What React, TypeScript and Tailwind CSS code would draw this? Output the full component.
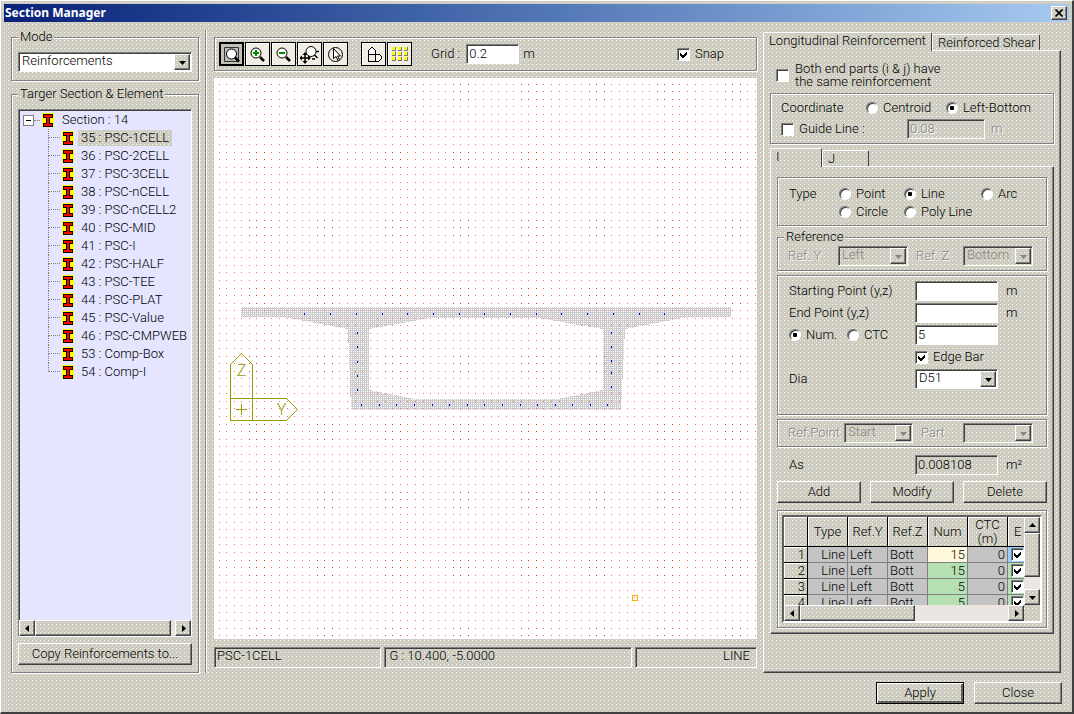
import React from 'react'
import clsx from 'clsx'

const face =
  'bg-[#ccccc4] bg-[image:conic-gradient(at_1px_1px,transparent_75%,#ffffcc_0),conic-gradient(at_1px_1px,transparent_75%,#ecdcc4_0)] bg-size-[4px_4px] bg-position-[0_0,2px_2px] bg-fixed'
const raised =
  'border border-t-white border-l-white border-r-[#404040] border-b-[#404040] shadow-[inset_-1px_-1px_0_#808080]'
const sunken =
  'border border-t-[#808080] border-l-[#808080] border-r-white border-b-white shadow-[inset_1px_1px_0_#404040]'
const etched = 'border border-[#808080] shadow-[1px_1px_0_#fff,inset_1px_1px_0_#fff]'
const disabledText = 'text-[#84847e] [text-shadow:1px_1px_0_#fff]'

const sections = [
  '35 : PSC-1CELL',
  '36 : PSC-2CELL',
  '37 : PSC-3CELL',
  '38 : PSC-nCELL',
  '39 : PSC-nCELL2',
  '40 : PSC-MID',
  '41 : PSC-I',
  '42 : PSC-HALF',
  '43 : PSC-TEE',
  '44 : PSC-PLAT',
  '45 : PSC-Value',
  '46 : PSC-CMPWEB',
  '53 : Comp-Box',
  '54 : Comp-I',
]

const bars = [
  { id: 1, type: 'Line', refY: 'Left', refZ: 'Bott', num: 15, ctc: 0 },
  { id: 2, type: 'Line', refY: 'Left', refZ: 'Bott', num: 15, ctc: 0 },
  { id: 3, type: 'Line', refY: 'Left', refZ: 'Bott', num: 5, ctc: 0 },
  { id: 4, type: 'Line', refY: 'Left', refZ: 'Bott', num: 5, ctc: 0 },
]

const arrows = {
  up: 'M0 5h7L3.5 1z',
  down: 'M0 2h7L3.5 6z',
  left: 'M5 0v7L1 3.5z',
  right: 'M2 0v7l4-3.5z',
}

const Arrow = ({ dir }: { dir: keyof typeof arrows }) => (
  <svg width="7" height="7" viewBox="0 0 7 7" fill="currentColor">
    <path d={arrows[dir]} />
  </svg>
)

const ScrollButton = ({ dir }: { dir: keyof typeof arrows }) => (
  <button aria-label={`Scroll ${dir}`} className={clsx('flex size-4 shrink-0 items-center justify-center', face, raised)}>
    <Arrow dir={dir} />
  </button>
)

const Button = ({ children, primary }: { children: React.ReactNode; primary?: boolean }) => (
  <button
    className={clsx(
      'h-[22px] w-full',
      face,
      primary ? 'border border-black shadow-[inset_1px_1px_0_#fff,inset_-2px_-2px_0_#606060]' : raised,
    )}
  >
    {children}
  </button>
)

type CheckboxProps = { label?: React.ReactNode; checked?: boolean; tight?: boolean; title?: string }

const Checkbox = ({ label, checked, tight, title }: CheckboxProps) => (
  <label className={clsx('flex items-center', tight ? 'gap-1.5 leading-[13px]' : 'gap-[5px]')}>
    <span className="relative size-[13px] shrink-0">
      <input
        type="checkbox"
        aria-label={title}
        defaultChecked={checked}
        className={clsx('peer block size-full appearance-none bg-white', sunken)}
      />
      <svg viewBox="0 0 13 13" className="pointer-events-none absolute inset-0 hidden peer-checked:block" shapeRendering="crispEdges">
        <path d="M3 5v3l2 2h1l4-4V3L5.500 7.500z" fill="#000" />
      </svg>
    </span>
    {label && <span>{label}</span>}
  </label>
)

const Radio = ({ name, label, checked }: { name: string; label: string; checked?: boolean }) => (
  <label className="flex items-center gap-[5px] whitespace-nowrap">
    <input
      type="radio"
      name={name}
      defaultChecked={checked}
      className="size-3 shrink-0 appearance-none rounded-full border border-t-[#707070] border-r-white border-b-white border-l-[#707070] bg-white shadow-[inset_1px_1px_0_#404040] checked:bg-[radial-gradient(circle,#000_2px,transparent_2.5px)]"
    />
    {label}
  </label>
)

type SelectProps = { id: string; value: string; disabled?: boolean; label?: string }

const Select = ({ id, value, disabled, label }: SelectProps) => (
  <span className={clsx('relative block h-5 w-full', disabled ? disabledText : 'text-black')}>
    <select
      id={id}
      aria-label={label}
      disabled={disabled}
      className={clsx('block size-full appearance-none pr-4 pb-[2px] pl-[3px] leading-4 opacity-100', sunken, disabled ? face : 'bg-white')}
    >
      <option>{value}</option>
    </select>
    <span className={clsx('pointer-events-none absolute inset-y-[2px] right-[2px] flex w-4 items-center justify-center', face, raised)}>
      <Arrow dir="down" />
    </span>
  </span>
)

type FieldProps = { id: string; value?: string; readOnly?: boolean; disabled?: boolean; label?: string }

const Field = ({ id, value = '', readOnly, disabled, label }: FieldProps) => (
  <input
    id={id}
    type="text"
    aria-label={label}
    defaultValue={value}
    readOnly={readOnly}
    disabled={disabled}
    className={clsx('block h-5 w-full min-w-0 pb-[2px] pl-[2px] leading-4', sunken, readOnly || disabled ? face : 'bg-white', disabled && disabledText)}
  />
)

const BeamIcon = () => (
  <svg width="13" height="16" viewBox="0 0 13 16" className="shrink-0" shapeRendering="crispEdges">
    <path d="M1 1h12v14H1z" fill="#ff0" />
    <path d="M2 2h10v4H9v5h3v4H2v-4h3V6H2z" fill="#000" />
    <path d="M3 3h8v2H8v7h3v2H3v-2h3V5H3z" fill="#f00" />
  </svg>
)

const SectionTree = () => (
  <div className={clsx('flex min-h-0 flex-1 flex-col bg-[#e5e5ff]', sunken)}>
    <div className="flex-1 overflow-hidden pt-px pl-1 whitespace-nowrap">
      <div className="flex h-[18px] items-center">
        <button aria-label="Collapse" className="flex size-[11px] items-center justify-center border border-[#808080] bg-white">
          <span className="h-px w-[5px] bg-black" />
        </button>
        <span className="mr-px w-1.5 border-t border-dotted border-[#808080]" />
        <BeamIcon />
        <span className="ml-2">Section : 14</span>
      </div>
      <ul>
        {sections.map((name, i) => (
          <li key={name} className="flex h-[18px] items-center pl-[25px]">
            <span className="flex h-full w-3 shrink-0 flex-col">
              <span className="h-[9px] border-b border-l border-dotted border-[#808080]" />
              <span className={clsx('h-[9px]', i < sections.length - 1 && 'border-l border-dotted border-[#808080]')} />
            </span>
            <span className="ml-px flex">
              <BeamIcon />
            </span>
            <span className={clsx('ml-1 px-[3px] leading-4', i === 0 && face)}>{name}</span>
          </li>
        ))}
      </ul>
    </div>
    <div className="flex bg-[#e6e4dc]">
      <ScrollButton dir="left" />
      <span className={clsx('mr-1 h-4 flex-1', face, raised)} />
      <ScrollButton dir="right" />
    </div>
  </div>
)

const tools = [
  {
    name: 'Zoom window',
    icon: (
      <>
        <path d="M2.500 2.500h14v14h-14z" fill="#b8b8b8" stroke="#333" />
        <circle cx="9.500" cy="9" r="5" fill="#fff" stroke="#000" />
        <path d="M13 12.500l4 4" stroke="#000" strokeWidth="2.500" />
      </>
    ),
  },
  {
    name: 'Zoom in',
    icon: (
      <>
        <circle cx="8" cy="8" r="5" fill="#fff" stroke="#000" />
        <path d="M12 12l4 4" stroke="#000" strokeWidth="2.500" />
        <path d="M5 8h6M8 5v6" stroke="#080" strokeWidth="2" />
      </>
    ),
  },
  {
    name: 'Zoom out',
    icon: (
      <>
        <circle cx="8" cy="8" r="5" fill="#fff" stroke="#000" />
        <path d="M12 12l4 4" stroke="#000" strokeWidth="2.500" />
        <path d="M5 8h6" stroke="#080" strokeWidth="2" />
      </>
    ),
  },
  {
    name: 'Dynamic zoom',
    icon: (
      <>
        <circle cx="11" cy="6.500" r="5" fill="#fff" stroke="#000" />
        <path d="M14.500 10l3 3M12 14h3M16 6.500h3" stroke="#000" strokeWidth="1.500" />
        <path d="M0 13h10M5 8v10" stroke="#000" strokeWidth="1.500" />
        <path d="M5 7l2.500 3h-5zM5 19l2.500-3h-5zM-1 13l3-2.500v5zM11 13l-3-2.500v5z" fill="#000" />
      </>
    ),
  },
  {
    name: 'Select',
    icon: (
      <>
        <circle cx="9.500" cy="9.500" r="7" fill="none" stroke="#000" />
        <path d="M7.500 3.500v10l2.500-2 2 4 1.500-1-2-3.500h3z" fill="#fff" stroke="#000" />
      </>
    ),
  },
]

const viewTools = [
  {
    name: 'Show axes',
    icon: (
      <path
        d="M4.500 16.500v-11l3.500-3.500 3.500 3.500v11M4.500 16.500h10l3-3v-2l-2-2h-11"
        fill="#fff"
        fillOpacity=".6"
        stroke="#000"
        shapeRendering="crispEdges"
      />
    ),
  },
  {
    name: 'Show grid',
    icon: [2, 7, 12].map((y) =>
      [2, 8, 14].map((x) => (
        <g key={`${x}-${y}`} shapeRendering="crispEdges">
          <rect x={x} y={y} width="4" height="4" fill="#777" />
          <rect x={x} y={y} width="3" height="3" fill="#ff0" />
        </g>
      )),
    ),
  },
]

const ToolButton = ({ name, icon, active }: { name: string; icon: React.ReactNode; active?: boolean }) => (
  <button
    aria-label={name}
    className={clsx(
      'flex h-6 w-[25px] items-center justify-center border-black',
      active ? 'border-2 bg-[#c0c0b8]' : 'border bg-[#f0eee4] shadow-[inset_1px_1px_0_#fff]',
    )}
  >
    <svg width="19" height="19" viewBox="0 0 19 19" fill="none" className="shrink-0">
      {icon}
    </svg>
  </button>
)

const Toolbar = () => (
  <div className={clsx('flex h-[34px] items-center pr-8 pl-1', etched)}>
    <div className="flex gap-px">
      {tools.map((tool, i) => (
        <ToolButton key={tool.name} {...tool} active={i === 0} />
      ))}
    </div>
    <div className="ml-[13px] flex gap-px">
      {viewTools.map((tool) => (
        <ToolButton key={tool.name} {...tool} />
      ))}
    </div>
    <label htmlFor="grid" className="mr-1.5 ml-[19px] whitespace-nowrap">
      Grid :
    </label>
    <div className="w-[53px]">
      <Field id="grid" value="0.2" />
    </div>
    <span className="ml-1">m</span>
    <div className="ml-auto">
      <Checkbox label="Snap" checked />
    </div>
  </div>
)

const gridSteps = [0, 7, 15, 22, 30, 37, 45, 52, 60]

const rebars = [
  ...[90, 116, 142, 168, 193, 219, 245, 270, 296, 322, 347, 373, 399, 425, 450].map((x) => [x, 235]),
  ...[147, 165, 182, 200, 218, 235, 253, 270, 288, 306, 323, 341, 358, 376, 393].map((x) => [x, 326]),
  ...[254, 268, 283, 297, 311].map((y) => [143, y]),
  ...[254, 268, 282, 294, 308].map((y) => [397, y]),
]

const Drawing = () => (
  <svg className="block min-h-[561px] w-full flex-1 bg-white" shapeRendering="crispEdges">
    <defs>
      <pattern id="snap-grid" x="5" y="6" width="68" height="68" patternUnits="userSpaceOnUse">
        {gridSteps.map((y, j) =>
          gridSteps.map((x, i) => (
            <rect key={`${x}-${y}`} x={x} y={y} width="1" height="1" fill={j < 3 && i > 3 && i < 7 ? '#cc3333' : '#ff6666'} />
          )),
        )}
      </pattern>
      <pattern id="concrete" width="2" height="2" patternUnits="userSpaceOnUse">
        <path d="M0 0h2v2H0z" fill="#cccccc" />
        <path d="M1 1h1v1H1z" fill="#fff" />
      </pattern>
    </defs>
    <path
      fill="url(#concrete)"
      fillRule="evenodd"
      d="M27 229H517V239H474L411 251L407 332H137L134 251L69 239H27zM155 251V312L200 321H343L389 312V251L324 240H216z"
    />
    <rect width="100%" height="100%" fill="url(#snap-grid)" />
    {rebars.map(([x, y]) => (
      <rect key={`${x}-${y}`} x={x} y={y} width="1" height="2" fill="#0000ff" />
    ))}
    <g fill="none" stroke="#999900">
      <path d="M16.500 342.500V286.500L27.500 275.500L38.500 286.500V342.500zM16.500 320.500H72.500L83.500 331.500L72.500 342.500H16.500M22 331.500h11M27.500 326v11" />
    </g>
    <g fill="#999900" fontSize="16" fontWeight="300" textAnchor="middle">
      <text x="27.500" y="298">Z</text>
      <text x="67.500" y="337">Y</text>
    </g>
    <rect x="418.500" y="517.500" width="5" height="5" fill="none" stroke="#ffaa00" />
  </svg>
)

const StatusBar = () => (
  <div className="mt-2 mb-[5px] grid h-[21px] grid-cols-[168fr_249fr_122fr] gap-[3px] leading-4">
    <div className={clsx('pl-[2px]', sunken)}>PSC-1CELL</div>
    <div className={clsx('pl-1', sunken)}>G : 10.400, -5.0000</div>
    <div className={clsx('pr-1.5 text-right', sunken)}>LINE</div>
  </div>
)

type TabsProps = { tabs: string[]; padding: string; widths: string[] }

const Tabs = ({ tabs, padding, widths }: TabsProps) => (
  <div role="tablist" className="flex items-end">
    {tabs.map((tab, i) => (
      <button
        key={tab}
        role="tab"
        aria-selected={i === 0}
        className={clsx(
          'rounded-t-xs border border-b-0 border-t-white border-r-[#404040] border-l-white text-left leading-4 whitespace-nowrap',
          padding,
          widths[i],
          i === 0 ? clsx('relative -mb-px h-[19px] pb-[3px]', face) : 'h-4',
        )}
      >
        {tab}
      </button>
    ))}
  </div>
)

const cell = 'h-4 overflow-hidden border-r border-b border-[#808080] px-[2px] whitespace-nowrap'
const headCell = 'border-r border-b border-black border-r-black px-0 font-[350] shadow-[inset_1px_1px_0_#fff]'

const BarTable = () => (
  <div className={clsx('grid grid-cols-[1fr_16px] grid-rows-[88px_16px] border-2 border-t-[#606060] border-r-white border-b-white border-l-[#606060]', face)}>
    <div className="overflow-hidden">
      <table className="w-[264px] table-fixed border-separate border-spacing-0 leading-[15px]">
        <colgroup>
          <col className="w-6" />
        </colgroup>
        <thead>
          <tr className="h-[30px] leading-[14px]">
            {['', 'Type', 'Ref.Y', 'Ref.Z', 'Num', 'CTC (m)', 'E'].map((title) => (
              <th key={title} className={clsx(headCell, face, title === 'E' && 'pl-1.5 text-left')}>
                {title}
              </th>
            ))}
          </tr>
        </thead>
        <tbody>
          {bars.map((bar, i) => (
            <tr key={bar.id} className="bg-[#c4c4c4]">
              <th className={clsx(headCell, face, 'h-4 pr-[2px] text-right')}>{bar.id}</th>
              <td className={clsx(cell, 'text-right')}>{bar.type}</td>
              <td className={cell}>{bar.refY}</td>
              <td className={cell}>{bar.refZ}</td>
              <td className={clsx(cell, 'text-right', i === 0 ? 'bg-[#fff8dc]' : 'bg-[#b4e0b4]')}>{bar.num}</td>
              <td className={clsx(cell, 'text-right')}>{bar.ctc}</td>
              <td className={clsx(cell, 'pl-[3px]', i === 0 ? 'bg-[#99ccff]' : 'bg-[#b4e0b4]')}>
                <Checkbox title={`Edge bar ${bar.id}`} checked />
              </td>
            </tr>
          ))}
        </tbody>
      </table>
    </div>
    <div className="flex flex-col bg-[#ece6e2]">
      <ScrollButton dir="up" />
      <span className={clsx('mb-3 flex-1', face, raised)} />
      <ScrollButton dir="down" />
    </div>
    <div className="flex bg-[#ece6e2]">
      <ScrollButton dir="left" />
      <span className={clsx('h-4 w-[115px]', face, raised)} />
      <span className="flex-1" />
      <ScrollButton dir="right" />
    </div>
  </div>
)

const pointRow = 'grid h-[22px] grid-cols-[126px_83px_1fr] items-center'

const BarForm = () => (
  <div className={clsx('border border-t-white border-r-[#404040] border-b-[#404040] border-l-white px-1.5 pt-2.5 pb-[5px] shadow-[inset_-1px_-1px_0_#808080]')}>
    <div className={clsx('pt-[7px] pb-1 pl-[11px]', etched)}>
      <div className="grid h-[18px] grid-cols-[50px_65px_77px_1fr] items-center">
        <span>Type</span>
        <Radio name="type" label="Point" />
        <Radio name="type" label="Line" checked />
        <Radio name="type" label="Arc" />
      </div>
      <div className="grid h-[18px] grid-cols-[50px_65px_1fr] items-center">
        <span />
        <Radio name="type" label="Circle" />
        <Radio name="type" label="Poly Line" />
      </div>
    </div>

    <fieldset className={clsx('mt-[3px] min-w-0 pt-px pb-1 pl-2.5', etched)}>
      <legend className={clsx('-ml-1 px-[2px] leading-4', face)}>Reference</legend>
      <div className="grid grid-cols-[50px_70px_55px_70px] items-center">
        <label htmlFor="ref-y" className={disabledText}>
          Ref. Y
        </label>
        <Select id="ref-y" value="Left" disabled />
        <label htmlFor="ref-z" className={clsx('pl-2', disabledText)}>
          Ref. Z
        </label>
        <Select id="ref-z" value="Bottom" disabled />
      </div>
    </fieldset>

    <div className={clsx('mt-1 pt-1 pb-6 pl-[11px]', etched)}>
      <div className={pointRow}>
        <label htmlFor="start-point">Starting Point (y,z)</label>
        <Field id="start-point" />
        <span className="pl-2">m</span>
      </div>
      <div className={pointRow}>
        <label htmlFor="end-point">End Point (y,z)</label>
        <Field id="end-point" />
        <span className="pl-2">m</span>
      </div>
      <div className={pointRow}>
        <div className="flex gap-2.5">
          <Radio name="spacing" label="Num." checked />
          <Radio name="spacing" label="CTC" />
        </div>
        <Field id="bar-count" value="5" label="Number of bars" />
      </div>
      <div className={pointRow}>
        <div className="col-start-2">
          <Checkbox label="Edge Bar" checked />
        </div>
      </div>
      <div className={pointRow}>
        <label htmlFor="dia">Dia</label>
        <Select id="dia" value="D51" />
      </div>
    </div>

    <div className={clsx('mt-1 grid grid-cols-[56px_69px_50px_70px] items-center py-[3px] pl-2.5', etched)}>
      <label htmlFor="ref-point" className={clsx('whitespace-nowrap', disabledText)}>
        Ref.Point
      </label>
      <Select id="ref-point" value="Start" disabled />
      <label htmlFor="part" className={clsx('pl-2', disabledText)}>
        Part
      </label>
      <Select id="part" value="" disabled />
    </div>

    <div className="mt-2 grid h-5 grid-cols-[126px_83px_1fr] items-center pl-3">
      <label htmlFor="area">As</label>
      <Field id="area" value="0.008108" readOnly />
      <span className="pl-2">m²</span>
    </div>

    <div className="mt-1.5 grid grid-cols-[84px_84px_84px] justify-between">
      <Button>Add</Button>
      <Button>Modify</Button>
      <Button>Delete</Button>
    </div>

    <div className={clsx('mt-[7px] p-1', etched)}>
      <BarTable />
    </div>
  </div>
)

const ReinforcementPanel = () => (
  <div className="flex w-[298px] shrink-0 flex-col pt-[10px]">
    <Tabs tabs={['Longitudinal Reinforcement', 'Reinforced Shear']} padding="px-[5px]" widths={['w-[169px]', 'w-[108px]']} />
    <div className="flex-1 border border-t-white border-r-[#404040] border-b-[#404040] border-l-white pt-[11px] pr-[6px] pl-1.5 shadow-[inset_-1px_-1px_0_#808080]">
      <div className="pl-1.5">
        <Checkbox
          tight
          label={
            <>
              Both end parts (i & j) have
              <br />
              the same reinforcement
            </>
          }
        />
      </div>
      <div className={clsx('mt-[5px] flex flex-col gap-px py-1 pl-2.5', etched)}>
        <div className="grid h-5 grid-cols-[85px_80px_1fr] items-center">
          <span>Coordinate</span>
          <Radio name="coordinate" label="Centroid" />
          <Radio name="coordinate" label="Left-Bottom" checked />
        </div>
        <div className="grid h-5 grid-cols-[126px_78px_1fr] items-center">
          <Checkbox label="Guide Line :" />
          <Field id="guide-line" value="0.08" label="Guide line" disabled />
          <span className={clsx('pl-1.5', disabledText)}>m</span>
        </div>
      </div>
      <div className="mt-1">
        <Tabs tabs={['I', 'J']} padding="px-[5px]" widths={['w-[52px]', 'w-[47px]']} />
        <BarForm />
      </div>
    </div>
  </div>
)

const App = () => {
  return (
    <div
      className={clsx(
        'flex min-h-screen flex-col border-t border-r-2 border-b-2 border-l border-t-white border-r-[#404040] border-b-[#404040] border-l-white font-[Roboto,"Liberation_Sans",sans-serif] text-[13px] leading-4 font-[350] text-black',
        face,
      )}
    >
      <header className="mx-[3px] mt-[3px] flex h-[18px] items-center justify-between bg-linear-to-r from-[#0a2078] to-[#a6caf0] pr-[2px]">
        <h1 className="pl-px font-['Noto_Sans',sans-serif] text-xs font-bold text-white">Section Manager</h1>
        <button aria-label="Close window" className={clsx('flex h-[14px] w-4 items-center justify-center', face, raised)}>
          <svg width="8" height="8" viewBox="0 0 8 8" stroke="#000" strokeWidth="1.700">
            <path d="M0.500 0.500l7 7M7.500 0.500l-7 7" />
          </svg>
        </button>
      </header>

      <main className="flex flex-1 pr-[11px] pl-2.5">
        <div className="flex w-[188px] shrink-0 flex-col pt-[7px]">
          <fieldset className={clsx('min-w-0 px-1.5 pt-[7px] pb-2', etched)}>
            <legend className={clsx('px-[2px] leading-4', face)}>Mode</legend>
            <Select id="mode" value="Reinforcements" label="Mode" />
          </fieldset>
          <fieldset className={clsx('mt-[5px] flex min-w-0 flex-1 flex-col px-1.5 pt-[7px] pb-[7px]', etched)}>
            <legend className={clsx('px-[2px] leading-4 whitespace-nowrap', face)}>Targer Section &amp; Element</legend>
            <SectionTree />
            <div className="mt-1.5">
              <Button>Copy Reinforcements to...</Button>
            </div>
          </fieldset>
        </div>

        <div className="mx-1.5 mt-2 w-[2px] shrink-0 border-r border-l border-r-white border-l-[#808080]" />

        <div className="flex min-w-0 flex-1 flex-col pt-[15px] pr-1.5 pl-px">
          <Toolbar />
          <div className="mt-[7px] flex flex-1 flex-col">
            <Drawing />
          </div>
          <StatusBar />
        </div>

        <ReinforcementPanel />
      </main>

      <footer className="flex justify-end gap-2.5 pt-[9px] pr-2.5 pb-2">
        <div className="w-22">
          <Button primary>Apply</Button>
        </div>
        <div className="w-22">
          <Button>Close</Button>
        </div>
      </footer>
    </div>
  )
}

export default App
